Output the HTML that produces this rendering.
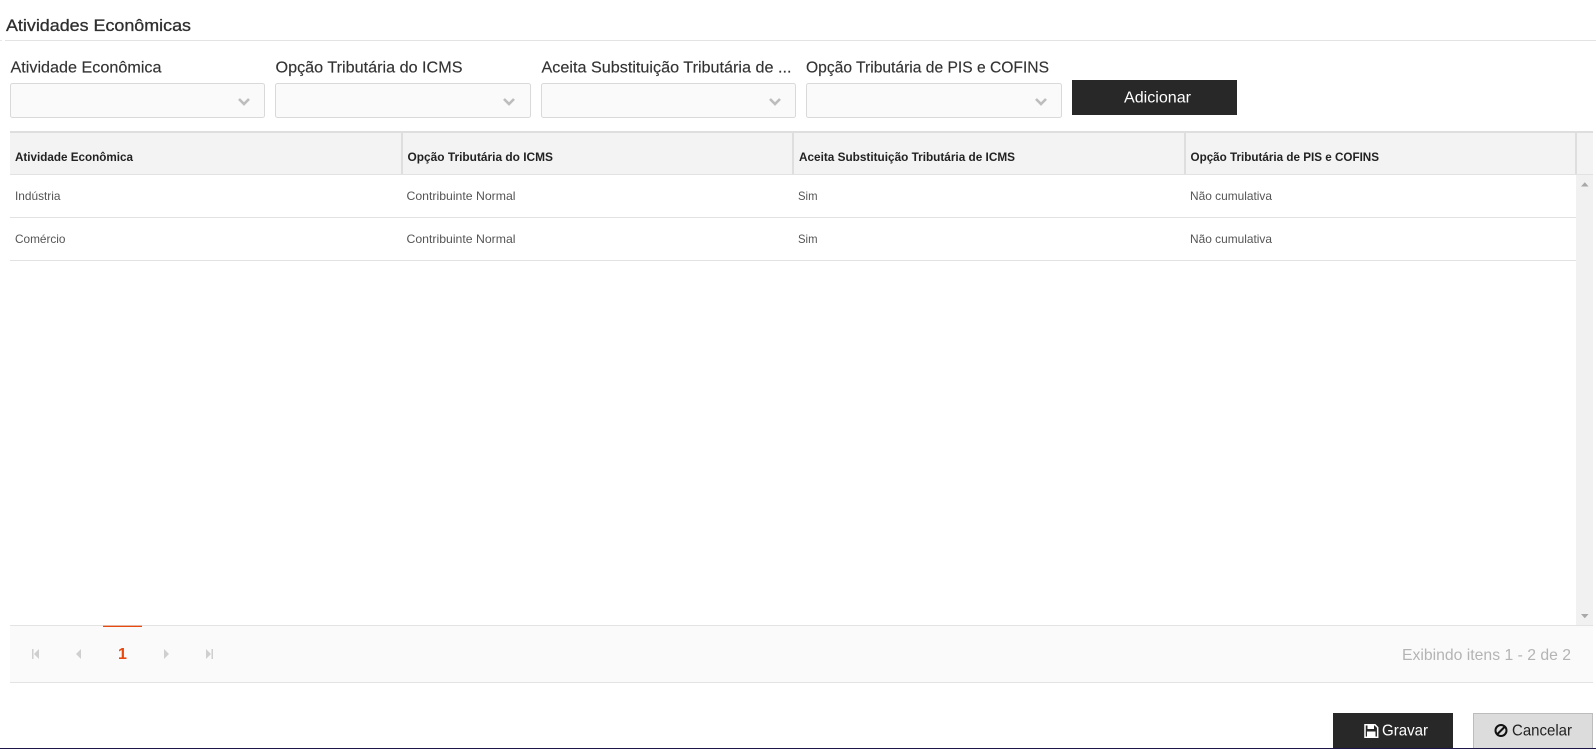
<!DOCTYPE html>
<html lang="pt-BR">
<head>
<meta charset="utf-8">
<title>Atividades Econômicas</title>
<style>
html,body{margin:0;padding:0;background:#fff;width:1596px;height:749px;overflow:hidden}
svg{display:block}
text{font-family:"Liberation Sans",Arial,sans-serif}
.t{fill:#2f2f2f;font-size:17px;stroke:#2f2f2f;stroke-width:.3px}
.l{fill:#333;font-size:16px;stroke:#333;stroke-width:.15px}
.h{fill:#222;font-size:12px;font-weight:bold}
.b{fill:#555;font-size:12px}
</style>
</head>
<body>
<svg width="1596" height="749" viewBox="0 0 1596 749" xmlns="http://www.w3.org/2000/svg">
<rect width="1596" height="749" fill="#fff"/>

<text class="t" x="6" y="31" textLength="185" lengthAdjust="spacingAndGlyphs">Atividades Econômicas</text>
<rect x="0" y="40" width="2" height="1" fill="#e8e8e8"/>
<rect x="5" y="40" width="1591" height="1" fill="#e3e3e3"/>

<text class="l" x="10.5" y="72.5" textLength="151" lengthAdjust="spacingAndGlyphs">Atividade Econômica</text>
<text class="l" x="275.5" y="72.5" textLength="187" lengthAdjust="spacingAndGlyphs">Opção Tributária do ICMS</text>
<text class="l" x="541.5" y="72.5" textLength="250" lengthAdjust="spacingAndGlyphs">Aceita Substituição Tributária de ...</text>
<text class="l" x="806" y="72.5" textLength="243" lengthAdjust="spacingAndGlyphs">Opção Tributária de PIS e COFINS</text>

<g fill="#fafafa" stroke="#d9d9d9">
<rect x="10.5" y="83.5" width="254" height="34" rx="2"/>
<rect x="275.5" y="83.5" width="255" height="34" rx="2"/>
<rect x="541.5" y="83.5" width="254" height="34" rx="2"/>
<rect x="806.5" y="83.5" width="255" height="34" rx="2"/>
</g>
<g fill="none" stroke="#bdbdbd" stroke-width="2.6">
<path d="M239 99l5 5 5-5"/>
<path d="M504 99l5 5 5-5"/>
<path d="M770 99l5 5 5-5"/>
<path d="M1036 99l5 5 5-5"/>
</g>

<rect x="1072" y="80" width="165" height="35" fill="#282828"/>
<text x="1124" y="102.5" font-size="16" fill="#fff" textLength="67" lengthAdjust="spacingAndGlyphs">Adicionar</text>

<rect x="10" y="131" width="1583" height="43" fill="#f3f3f3"/>
<rect x="10" y="131" width="1583" height="2" fill="#dedede"/>
<rect x="10" y="174" width="1583" height="1" fill="#e2e2e2"/>
<rect x="401" y="133" width="2" height="41" fill="#dedede"/>
<rect x="792" y="133" width="2" height="41" fill="#dedede"/>
<rect x="1184" y="133" width="2" height="41" fill="#dedede"/>
<rect x="1575" y="133" width="2" height="41" fill="#dedede"/>

<text class="h" x="15" y="161" textLength="118" lengthAdjust="spacingAndGlyphs">Atividade Econômica</text>
<text class="h" x="407.5" y="161" textLength="145.5" lengthAdjust="spacingAndGlyphs">Opção Tributária do ICMS</text>
<text class="h" x="799" y="161" textLength="216" lengthAdjust="spacingAndGlyphs">Aceita Substituição Tributária de ICMS</text>
<text class="h" x="1190.5" y="161" textLength="188.5" lengthAdjust="spacingAndGlyphs">Opção Tributária de PIS e COFINS</text>

<text class="b" x="15" y="200" textLength="45.5" lengthAdjust="spacingAndGlyphs">Indústria</text>
<text class="b" x="406.5" y="200" textLength="109" lengthAdjust="spacingAndGlyphs">Contribuinte Normal</text>
<text class="b" x="798" y="200" textLength="19.5" lengthAdjust="spacingAndGlyphs">Sim</text>
<text class="b" x="1190" y="200" textLength="82" lengthAdjust="spacingAndGlyphs">Não cumulativa</text>
<rect x="10" y="217" width="1566" height="1" fill="#e2e2e2"/>

<text class="b" x="15" y="243" textLength="50.5" lengthAdjust="spacingAndGlyphs">Comércio</text>
<text class="b" x="406.5" y="243" textLength="109" lengthAdjust="spacingAndGlyphs">Contribuinte Normal</text>
<text class="b" x="798" y="243" textLength="19.5" lengthAdjust="spacingAndGlyphs">Sim</text>
<text class="b" x="1190" y="243" textLength="82" lengthAdjust="spacingAndGlyphs">Não cumulativa</text>
<rect x="10" y="260" width="1566" height="1" fill="#e2e2e2"/>

<rect x="1576" y="175" width="17" height="450" fill="#f1f1f1"/>
<path d="M1581 186.500l3.800-4.300 3.800 4.300z" fill="#a8a8a8"/>
<path d="M1581 614l3.800 4.300 3.800-4.300z" fill="#a8a8a8"/>

<rect x="10" y="625" width="1583" height="57" fill="#fafafa"/>
<rect x="10" y="625" width="1583" height="1" fill="#e3e3e3"/>
<rect x="10" y="682" width="1583" height="1" fill="#e3e3e3"/>
<rect x="103" y="625.700" width="39" height="1.300" fill="#e8490f"/>

<g fill="#cfcfcf">
<rect x="32" y="649" width="1.500" height="10"/>
<path d="M39 649v10l-5-5z"/>
<path d="M81 649v10l-5-5z"/>
<path d="M164 649v10l5-5z"/>
<path d="M206 649v10l5-5z"/>
<rect x="211.500" y="649" width="1.500" height="10"/>
</g>
<text x="118" y="659" font-size="16" font-weight="bold" fill="#e8490f">1</text>

<text x="1402" y="660" font-size="16" fill="#b4b4b4" textLength="169" lengthAdjust="spacingAndGlyphs">Exibindo itens 1 - 2 de 2</text>

<rect x="1333" y="713" width="120" height="35" fill="#282828"/>
<g transform="translate(1364 724)">
<path d="M1 .8h10l2.700 2.700v9.700H1z" fill="none" stroke="#fff" stroke-width="1.500"/>
<rect x="3.500" y="1" width="6.500" height="4" fill="#fff"/>
<rect x="3" y="7.500" width="8.500" height="5" fill="#fff"/>
</g>
<text x="1382" y="735.500" font-size="16" fill="#fff" textLength="46" lengthAdjust="spacingAndGlyphs">Gravar</text>

<rect x="1473.500" y="713.500" width="119" height="35" fill="#dcdcdc" stroke="#bcbcbc"/>
<g fill="none" stroke="#111" stroke-width="2">
<circle cx="1501" cy="730.500" r="5.500"/>
<path d="M1497 734.500l8-8"/>
</g>
<text x="1512" y="735.500" font-size="16" fill="#222" textLength="60" lengthAdjust="spacingAndGlyphs">Cancelar</text>

<rect x="0" y="748" width="1596" height="1" fill="#1e1648"/>
</svg>
</body>
</html>
